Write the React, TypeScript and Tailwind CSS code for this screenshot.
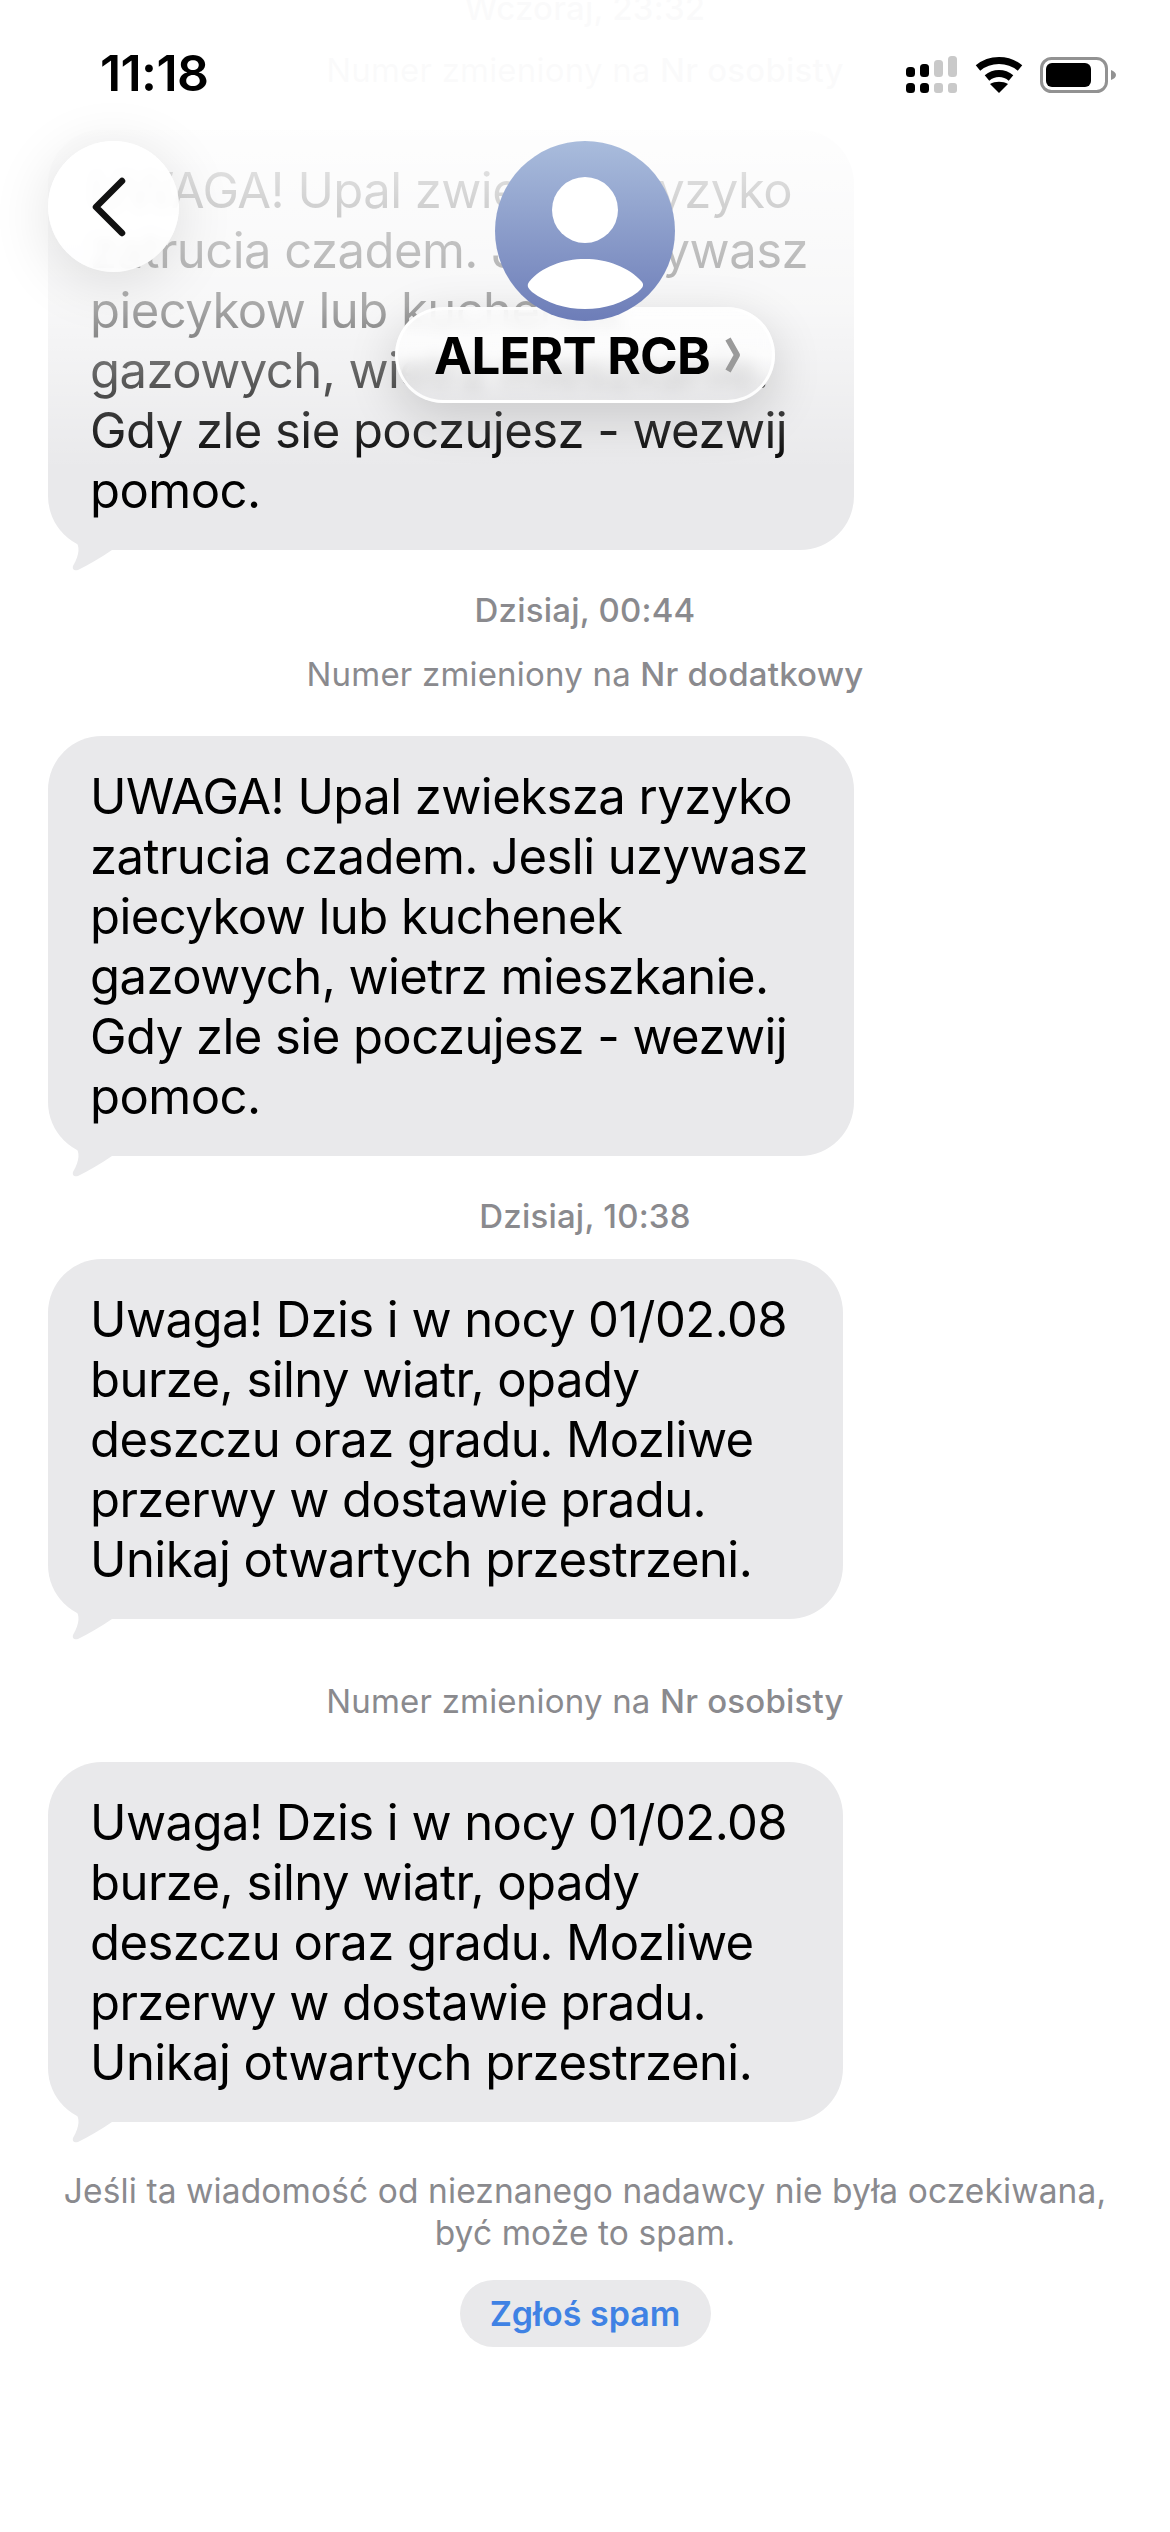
const SF = "font-['Inter','Liberation_Sans',sans-serif]"

const first = [
  "UWAGA! Upal zwieksza ryzyko",
  "zatrucia czadem. Jesli uzywasz",
  "piecykow lub kuchenek",
  "gazowych, wietrz mieszkanie.",
  "Gdy zle sie poczujesz - wezwij",
  "pomoc.",
]

const second = [
  "Uwaga! Dzis i w nocy 01/02.08",
  "burze, silny wiatr, opady",
  "deszczu oraz gradu. Mozliwe",
  "przerwy w dostawie pradu.",
  "Unikaj otwartych przestrzeni.",
]

function Bubble({ lines, className }: { lines: string[]; className: string }) {
  return (
    <div className={`relative ml-12 rounded-[54px] bg-[#e9e9eb] pb-[29px] pl-[42px] pr-[30px] pt-[31px] text-[49px] leading-[60px] tracking-[-0.55px] text-black ${className}`}>
      {lines.map((line) => (
        <div key={line} className="whitespace-nowrap">{line}</div>
      ))}
      <svg className="absolute bottom-[-21px] left-[22px] h-[41px] w-[44px]" viewBox="0 0 44 41" fill="#e9e9eb">
        <path d="M0 0 L5 10 C10 16 10 24 3 36 C2 40 5 41 8 40 C20 34 30 28 42 20 L42 0 Z" />
      </svg>
    </div>
  )
}

function Meta({ children, className }: { children: React.ReactNode; className: string }) {
  return <div className={`text-center text-[33px] leading-[40px] tracking-[0.2px] text-[#8a8a8e] ${className}`}>{children}</div>
}

function Signal() {
  return (
    <svg width="52" height="38" viewBox="0 0 52 38">
      <rect x="0" y="11" width="9" height="10" rx="3.5" fill="#000" />
      <rect x="14" y="8" width="9" height="13" rx="3.5" fill="#000" />
      <rect x="28" y="4" width="9" height="17" rx="3.5" fill="#c9c9c9" />
      <rect x="42" y="0" width="9" height="21" rx="3.5" fill="#c9c9c9" />
      <rect x="0" y="27" width="9" height="10" rx="3.5" fill="#000" />
      <rect x="14" y="27" width="9" height="10" rx="3.5" fill="#000" />
      <rect x="28" y="27" width="9" height="10" rx="3" fill="#c9c9c9" />
      <rect x="42" y="27" width="9" height="10" rx="3" fill="#c9c9c9" />
    </svg>
  )
}

function Wifi() {
  return (
    <svg width="48" height="36" viewBox="0 0 48 36" fill="none" stroke="#000" strokeWidth="7">
      <path d="M3 11 C15 1 33 1 45 11" />
      <path d="M12 21 C19 15 29 15 36 21" />
      <path d="M24 36 L15 27 C20 24 28 24 33 27 Z" fill="#000" stroke="none" />
    </svg>
  )
}

function Battery() {
  return (
    <svg width="76" height="36" viewBox="0 0 76 36">
      <rect x="1.5" y="1.5" width="65" height="33" rx="10" fill="none" stroke="#929292" strokeWidth="3" />
      <rect x="6" y="6" width="45" height="24" rx="6" fill="#000" />
      <path d="M71 13 C74 14 76 16 76 18 C76 20 74 22 71 23 Z" fill="#929292" />
    </svg>
  )
}

function Header() {
  return (
    <div className="absolute inset-x-0 top-0 h-[470px] bg-gradient-to-b from-[#fffffff5] from-25% via-[#ffffffa8] via-65% to-[#ffffff00]">
      <div className="flex h-[141px] items-start justify-between pl-[100px] pr-[54px] pt-[53px]">
        <div className="text-[50px] font-semibold leading-[40px] tracking-[-0.6px] text-black">11:18</div>
        <div className="flex items-center gap-[17px] pt-[3px]">
          <Signal />
          <Wifi />
          <Battery />
        </div>
      </div>
      <div className="relative flex justify-center">
        <button className="absolute left-12 top-0 flex h-[131px] w-[131px] items-center justify-center rounded-full bg-[#ffffffd9] shadow-[0_10px_60px_rgba(0,0,0,0.12)] backdrop-blur-[6px]">
          <svg width="36" height="60" viewBox="0 0 36 60" fill="none" stroke="#111" strokeWidth="6.5" strokeLinecap="round" strokeLinejoin="round" className="mr-[10px]">
            <path d="M31 4 L5 30 L31 56" />
          </svg>
        </button>
        <div className="flex flex-col items-center">
          <svg width="180" height="180" viewBox="0 0 180 180" className="relative z-10">
            <defs>
              <linearGradient id="avatar" x1="0" y1="0" x2="0" y2="1">
                <stop offset="0" stopColor="#a9bcdc" />
                <stop offset="1" stopColor="#6d7db8" />
              </linearGradient>
            </defs>
            <circle cx="90" cy="90" r="90" fill="url(#avatar)" />
            <circle cx="90" cy="69" r="33" fill="#fff" />
            <path d="M34 141 C46 126 68 118 90 118 C112 118 134 126 147 141 C150 145 146 148 143 151 C128 162 110 168 90 168 C70 168 52 162 37 151 C34 148 31 145 34 141 Z" fill="#fff" />
          </svg>
          <div className="mt-[-14px] flex h-[96px] w-[380px] items-center rounded-full border-[3px] border-[#ffffffe6] bg-gradient-to-b from-[#ffffffcc] via-[#ffffffb8] to-[#e4e4e6b8] pl-[36px] shadow-[0_14px_50px_rgba(0,0,0,0.16)] backdrop-blur-[8px]">
            <span className="text-[51px] font-bold leading-none tracking-[-0.7px] text-black">ALERT RCB</span>
            <svg width="16" height="36" viewBox="0 0 16 36" fill="none" stroke="#9a9a9a" strokeWidth="6" strokeLinejoin="round" className="ml-[15px]">
              <path d="M3 2 L12 18 L3 34" />
            </svg>
          </div>
        </div>
      </div>
    </div>
  )
}

export default function App() {
  return (
    <div className={`relative h-[2532px] w-[1170px] overflow-hidden bg-white ${SF}`}>
      <div className="flex flex-col">
        <Meta className="mt-[-12px] font-medium">Wczoraj, 23:32</Meta>
        <Meta className="mt-[22px]">Numer zmieniony na <span className="font-medium">Nr osobisty</span></Meta>
        <Bubble lines={first} className="mt-[40px] w-[806px]" />
        <Meta className="mt-[40px] font-medium">Dzisiaj, 00:44</Meta>
        <Meta className="mt-[24px]">Numer zmieniony na <span className="font-medium">Nr dodatkowy</span></Meta>
        <Bubble lines={first} className="mt-[42px] w-[806px]" />
        <Meta className="mt-[40px] font-medium">Dzisiaj, 10:38</Meta>
        <Bubble lines={second} className="mt-[23px] w-[795px]" />
        <Meta className="mt-[62px]">Numer zmieniony na <span className="font-medium">Nr osobisty</span></Meta>
        <Bubble lines={second} className="mt-[41px] w-[795px]" />
        <div className="mt-[48px] text-center text-[33.5px] leading-[42px] tracking-[0.1px] text-[#8a8a8e]">
          <div>Jeśli ta wiadomość od nieznanego nadawcy nie była oczekiwana,</div>
          <div>być może to spam.</div>
        </div>
        <button className="mx-auto mt-[26px] flex h-[67px] w-[251px] items-center justify-center rounded-full bg-[#e9e9eb] text-[34px] font-semibold text-[#3f82e4]">
          Zgłoś spam
        </button>
      </div>
      <Header />
    </div>
  )
}
